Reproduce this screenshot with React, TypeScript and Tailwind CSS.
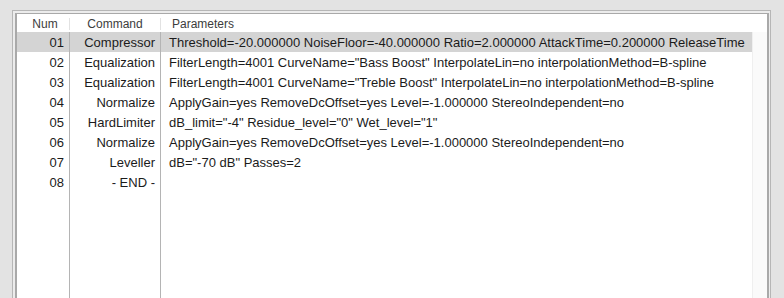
import React from 'react';

type Step = { num: string; command: string; params: string };

const steps: Step[] = [
  { num: '01', command: 'Compressor', params: 'Threshold=-20.000000 NoiseFloor=-40.000000 Ratio=2.000000 AttackTime=0.200000 ReleaseTime' },
  { num: '02', command: 'Equalization', params: 'FilterLength=4001 CurveName="Bass Boost" InterpolateLin=no interpolationMethod=B-spline' },
  { num: '03', command: 'Equalization', params: 'FilterLength=4001 CurveName="Treble Boost" InterpolateLin=no interpolationMethod=B-spline' },
  { num: '04', command: 'Normalize', params: 'ApplyGain=yes RemoveDcOffset=yes Level=-1.000000 StereoIndependent=no' },
  { num: '05', command: 'HardLimiter', params: 'dB_limit="-4" Residue_level="0" Wet_level="1"' },
  { num: '06', command: 'Normalize', params: 'ApplyGain=yes RemoveDcOffset=yes Level=-1.000000 StereoIndependent=no' },
  { num: '07', command: 'Leveller', params: 'dB="-70 dB" Passes=2' },
  { num: '08', command: '- END -', params: '' },
];

export default function App() {
  const selected = '01';

  return (
    <div
      className="w-[784px] h-[298px] overflow-hidden bg-[#e3e3e3] pt-[10px] pl-[12px]"
      style={{ fontFamily: '"Liberation Sans", Arial, sans-serif' }}
    >
      {/* Outer frame */}
      <div className="w-[759px] h-[288px] border-t border-l border-r border-[#b6b6b6] bg-[#ececec] pt-[2px] pl-[2px] pr-[1px]">
        {/* Inner list box */}
        <div className="h-full flex flex-col border-t border-l-2 border-r-2 border-t-[#a9a9a9] border-l-[#a9a9a9] border-r-[#a9a9a9] bg-white">
          {/* Header */}
          <div className="h-[18px] flex items-center text-[12px] text-[#3c3c3c] shrink-0 pt-[2px]">
            <div className="w-[53px] h-[12px] flex items-center justify-center pl-[4px] border-r border-[#e2e2e2]">Num</div>
            <div className="w-[91px] h-[12px] flex items-center justify-center border-r border-[#e2e2e2]">Command</div>
            <div className="flex-1 pl-[11px]">Parameters</div>
          </div>

          {/* Body */}
          <div className="flex-1 flex min-h-0">
            <div className="flex-1 flex flex-col min-w-0 text-[13px] text-[#1b1b1b]">
              {steps.map((s) => (
                <div
                  key={s.num}
                  className={`h-[20px] flex shrink-0 ${s.num === selected ? 'bg-[#d4d4d4]' : ''}`}
                >
                  <div className="w-[53px] h-full flex items-center justify-end pr-[5px] pt-[1px] border-r border-[#b4b4b4]">{s.num}</div>
                  <div className="w-[91px] h-full flex items-center justify-end pr-[5px] pt-[1px] border-r border-[#b4b4b4]">{s.command}</div>
                  <div className="flex-1 min-w-0 flex items-center pl-[8px] pt-[1px] whitespace-nowrap overflow-hidden">{s.params}</div>
                </div>
              ))}
              {/* filler keeps column lines running */}
              <div className="flex-1 flex">
                <div className="w-[53px] border-r border-[#b4b4b4]"></div>
                <div className="w-[91px] border-r border-[#b4b4b4]"></div>
                <div className="flex-1"></div>
              </div>
            </div>
            {/* Scroll track */}
            <div className="w-[15px] shrink-0 bg-[#fafafa] border-l border-[#efefef]"></div>
          </div>
        </div>
      </div>
    </div>
  );
}
